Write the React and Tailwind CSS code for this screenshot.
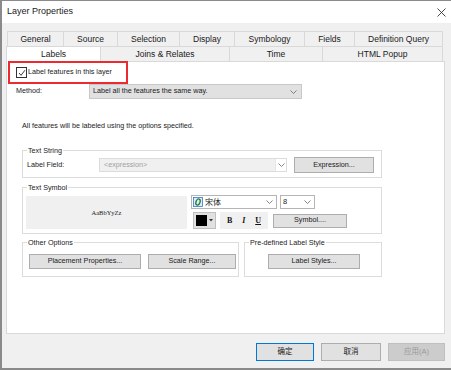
const FONT = "font-['Liberation_Sans','Noto_Sans_CJK_SC',sans-serif]";

function Chevron() {
  return (
    <svg width="7" height="4" viewBox="0 0 7 4">
      <polyline points="0.5,0.5 3.5,3.5 6.5,0.5" fill="none" stroke="#666" strokeWidth="0.8" />
    </svg>
  );
}

function Tab({ label, w, last }) {
  return (
    <div
      className={`flex items-center justify-center h-full border-t border-l border-[#d9d9d9] text-[8.5px] text-[#1a1a1a] ${last ? 'border-r' : ''}`}
      style={{ width: w }}
    >
      {label}
    </div>
  );
}

function Btn({ children, className = '' }) {
  return (
    <div className={`flex items-center justify-center bg-[#e1e1e1] border border-[#adadad] text-[7.2px] text-[#1a1a1a] ${className}`}>
      {children}
    </div>
  );
}

function Group({ title, className = '', children }) {
  return (
    <fieldset className={`border border-[#dcdcdc] ${className}`}>
      <legend className="ml-[4px] px-[1px] text-[7.2px] leading-[9px] text-[#1a1a1a]">{title}</legend>
      {children}
    </fieldset>
  );
}

function FontIcon() {
  return (
    <svg width="10" height="10" viewBox="0 0 10 10">
      <rect x="0.5" y="0.5" width="9" height="9" fill="#dcecfa" stroke="#3b78c2" strokeWidth="0.8" />
      <ellipse cx="5" cy="5" rx="2" ry="3.2" transform="rotate(20 5 5)" fill="none" stroke="#1f7a3a" strokeWidth="1.3" />
    </svg>
  );
}

export default function App() {
  const row1 = [
    ['General', 56],
    ['Source', 54],
    ['Selection', 62],
    ['Display', 55],
    ['Symbology', 70],
    ['Fields', 50],
    ['Definition Query', 89],
  ];

  return (
    <div className={`w-[451px] h-[370px] bg-[#f0f0f0] flex flex-col border-l-2 border-t border-b-2 border-[#8a8a8a] overflow-hidden ${FONT}`}>
      {/* title bar */}
      <div className="h-[22px] bg-white flex items-center justify-between pl-[5px] pr-[5px] shrink-0">
        <span className="text-[9px] text-[#1a1a1a]">Layer Properties</span>
        <svg width="9" height="9" viewBox="0 0 9 9">
          <path d="M0.5 0.5 L8.5 8.5 M8.5 0.5 L0.5 8.5" stroke="#333" strokeWidth="0.9" />
        </svg>
      </div>

      {/* tabs */}
      <div className="pt-[8px] shrink-0">
        <div className="flex ml-[5px] h-[15px]">
          {row1.map(([l, w], i) => (
            <Tab key={l} label={l} w={w} last={i === row1.length - 1} />
          ))}
        </div>
        <div className="flex ml-[4px] h-[15px] items-start">
          <div className="relative z-10 w-[95px] h-[16px] -mb-px bg-white border-t border-l border-r border-[#d9d9d9] flex items-center justify-center text-[8.5px] text-[#1a1a1a]">
            Labels
          </div>
          <div className="w-[129px] h-full flex items-center justify-center border-t border-r border-[#d9d9d9] text-[8.5px] text-[#1a1a1a]">Joins &amp; Relates</div>
          <div className="w-[93px] h-full flex items-center justify-center border-t border-r border-[#d9d9d9] text-[8.5px] text-[#1a1a1a]">Time</div>
          <div className="w-[120px] h-full flex items-center justify-center border-t border-r border-[#d9d9d9] text-[8.5px] text-[#1a1a1a]">HTML Popup</div>
        </div>
      </div>

      {/* panel */}
      <div className="ml-[4px] w-[439px] h-[273px] bg-white border border-[#d9d9d9] flex flex-col shrink-0">
        <div className="-mt-px ml-[1px] w-[120px] h-[23px] border-2 border-[#ec2a30] flex items-center pl-[6px] gap-[1px] relative z-20">
          <div className="w-[11px] h-[11px] border border-[#333] bg-white flex items-center justify-center">
            <svg width="8" height="8" viewBox="0 0 8 8">
              <polyline points="1,4 3,6.3 7,1.2" fill="none" stroke="#222" strokeWidth="0.9" />
            </svg>
          </div>
          <span className="text-[7.2px] text-[#1a1a1a]">Label features in this layer</span>
        </div>

        <div className="flex items-center h-[15px]">
          <span className="ml-[9px] w-[73px] text-[7.2px] text-[#1a1a1a]">Method:</span>
          <div className="w-[213px] h-[15px] bg-[#e1e1e1] border border-[#c8c8c8] flex items-center justify-between pl-[3px] pr-[4px]">
            <span className="text-[7.2px] text-[#1a1a1a]">Label all the features the same way.</span>
            <Chevron />
          </div>
        </div>

        <div className="mt-[22px] ml-[15px] text-[7.2px] leading-[9px] text-[#1a1a1a]">
          All features will be labeled using the options specified.
        </div>

        <Group title="Text String" className="mt-[16px] ml-[15px] w-[360px] pb-[4px]">
          <div className="mt-[2px] h-[16px] flex items-center pl-[4px]">
            <span className="w-[72px] text-[7.2px] text-[#1a1a1a]">Label Field:</span>
            <div className="w-[188px] h-[14px] bg-[#f0f0f0] border border-[#dcdcdc] flex items-center">
              <span className="flex-1 pl-[4px] text-[7.2px] text-[#a0a0a0]">&lt;expression&gt;</span>
              <div className="w-[11px] h-full bg-white border-l border-[#e6e6e6] flex items-center justify-center">
                <Chevron />
              </div>
            </div>
            <Btn className="ml-[7px] w-[80px] h-[16px]">Expression...</Btn>
          </div>
        </Group>

        <Group title="Text Symbol" className="mt-[5px] ml-[15px] w-[360px] pb-[4px]">
          <div className="mt-[4px] flex">
            <div className="ml-[3px] w-[161px] h-[33px] bg-[#f0f0f0] flex items-center justify-center">
              <span className="font-['Liberation_Serif',serif] text-[6.5px] text-[#222]">AaBbYyZz</span>
            </div>
            <div className="ml-[4px] -mt-px flex flex-col gap-[3px]">
              <div className="flex gap-[3px]">
                <div className="w-[86px] h-[14px] border border-[#b5b5b5] bg-white flex items-center pl-[1px] pr-[3px] gap-[2px]">
                  <FontIcon />
                  <span className="flex-1 text-[8px] text-[#1a1a1a] font-['Noto_Sans_CJK_SC',sans-serif]">宋体</span>
                  <Chevron />
                </div>
                <div className="w-[35px] h-[14px] border border-[#b5b5b5] bg-white flex items-center pl-[2px] pr-[3px]">
                  <span className="flex-1 text-[7.5px] text-[#1a1a1a]">8</span>
                  <Chevron />
                </div>
              </div>
              <div className="flex items-center">
                <div className="ml-[2px] w-[23px] h-[17px] bg-[#e1e1e1] border border-[#c0c0c0] flex items-center pl-[2px] gap-[2px]">
                  <div className="w-[11px] h-[11px] bg-black" />
                  <svg width="4" height="3" viewBox="0 0 4 3">
                    <polygon points="0,0 4,0 2,2.5" fill="#333" />
                  </svg>
                </div>
                <div className="ml-[4px] w-[48px] h-[17px] bg-[#f0f0f0] flex items-center justify-around px-[2px] font-['Liberation_Serif',serif] text-[8px] text-[#111]">
                  <span className="font-bold">B</span>
                  <span className="italic font-bold">I</span>
                  <span className="underline font-bold">U</span>
                </div>
                <Btn className="ml-[5px] w-[74px] h-[14px]">Symbol....</Btn>
              </div>
            </div>
          </div>
        </Group>

        <div className="mt-[4px] ml-[15px] flex gap-[5px]">
          <Group title="Other Options" className="w-[217px] pb-[7px]">
            <div className="mt-[7px] flex ml-[6px] gap-[7px]">
              <Btn className="w-[112px] h-[15px]">Placement Properties...</Btn>
              <Btn className="w-[88px] h-[15px]">Scale Range...</Btn>
            </div>
          </Group>
          <Group title="Pre-defined Label Style" className="w-[138px] pb-[7px]">
            <div className="mt-[7px] ml-[23px]">
              <Btn className="w-[92px] h-[15px]">Label Styles...</Btn>
            </div>
          </Group>
        </div>
      </div>

      {/* bottom buttons */}
      <div className="mt-[9px] flex ml-[254px] gap-[7px]">
        <div className="w-[58px] h-[18px] bg-[#e1e1e1] border border-[#0078d7] flex items-center justify-center text-[7.5px] text-[#1a1a1a]">确定</div>
        <div className="w-[60px] h-[18px] bg-[#e1e1e1] border border-[#adadad] flex items-center justify-center text-[7.5px] text-[#1a1a1a]">取消</div>
        <div className="w-[57px] h-[18px] bg-[#cccccc] border border-[#bfbfbf] flex items-center justify-center text-[7.5px] text-[#9a9a9a]">应用(A)</div>
      </div>
    </div>
  );
}
